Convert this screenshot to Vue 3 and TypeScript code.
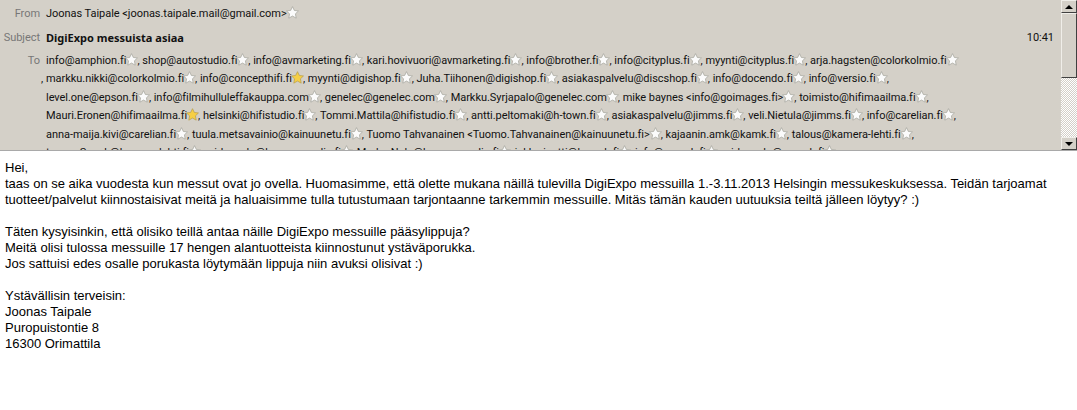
<script setup lang="ts">
interface Address {
  text: string
  gold?: boolean
}

const addr = (text: string, gold = false): Address => ({ text, gold })

const toRows: { lead: string; items: Address[]; trailing: boolean }[] = [
  {
    lead: 'To',
    trailing: false,
    items: [
      addr('info@amphion.fi'),
      addr('shop@autostudio.fi'),
      addr('info@avmarketing.fi'),
      addr('kari.hovivuori@avmarketing.fi'),
      addr('info@brother.fi'),
      addr('info@cityplus.fi'),
      addr('myynti@cityplus.fi'),
      addr('arja.hagsten@colorkolmio.fi')
    ]
  },
  {
    lead: ',',
    trailing: true,
    items: [
      addr('markku.nikki@colorkolmio.fi'),
      addr('info@concepthifi.fi', true),
      addr('myynti@digishop.fi'),
      addr('Juha.Tiihonen@digishop.fi'),
      addr('asiakaspalvelu@discshop.fi'),
      addr('info@docendo.fi'),
      addr('info@versio.fi')
    ]
  },
  {
    lead: '',
    trailing: true,
    items: [
      addr('level.one@epson.fi'),
      addr('info@filmihulluleffakauppa.com'),
      addr('genelec@genelec.com'),
      addr('Markku.Syrjapalo@genelec.com'),
      addr('mike baynes <info@goimages.fi>'),
      addr('toimisto@hifimaailma.fi')
    ]
  },
  {
    lead: '',
    trailing: true,
    items: [
      addr('Mauri.Eronen@hifimaailma.fi', true),
      addr('helsinki@hifistudio.fi'),
      addr('Tommi.Mattila@hifistudio.fi'),
      addr('antti.peltomaki@h-town.fi'),
      addr('asiakaspalvelu@jimms.fi'),
      addr('veli.Nietula@jimms.fi'),
      addr('info@carelian.fi')
    ]
  },
  {
    lead: '',
    trailing: true,
    items: [
      addr('anna-maija.kivi@carelian.fi'),
      addr('tuula.metsavainio@kainuunetu.fi'),
      addr('Tuomo Tahvanainen <Tuomo.Tahvanainen@kainuunetu.fi>'),
      addr('kajaanin.amk@kamk.fi'),
      addr('talous@kamera-lehti.fi')
    ]
  },
  {
    lead: '',
    trailing: false,
    items: [
      addr('teemu.Sopek@kamera-lehti.fi'),
      addr('mirka.salo@kameramedia.fi'),
      addr('Marko.Nalo@kameramedia.fi'),
      addr('jukka.juntti@kamek.fi'),
      addr('info@samok.fi'),
      addr('mirka.salo@samok.fi')
    ]
  }
]

const paragraphs: string[][] = [
  [
    'Hei,',
    'taas on se aika vuodesta kun messut ovat jo ovella. Huomasimme, että olette mukana näillä tulevilla DigiExpo messuilla 1.-3.11.2013 Helsingin messukeskuksessa. Teidän tarjoamat',
    'tuotteet/palvelut kiinnostaisivat meitä ja haluaisimme tulla tutustumaan tarjontaanne tarkemmin messuille. Mitäs tämän kauden uutuuksia teiltä jälleen löytyy? :)'
  ],
  [
    'Täten kysyisinkin, että olisiko teillä antaa näille DigiExpo messuille pääsylippuja?',
    'Meitä olisi tulossa messuille 17 hengen alantuotteista kiinnostunut ystäväporukka.',
    'Jos sattuisi edes osalle porukasta löytymään lippuja niin avuksi olisivat :)'
  ],
  [
    'Ystävällisin terveisin:',
    'Joonas Taipale',
    'Puropuistontie 8',
    '16300 Orimattila'
  ]
]
</script>

<template>
  <div class="mail">
    <div class="head">
      <div class="fields">
        <div class="field from">
          <span class="label">From</span>
          <span class="value">Joonas Taipale &lt;joonas.taipale.mail@gmail.com&gt;<svg class="star" viewBox="0 0 12 12"><path d="M6 .6 7.7 4.1 11.5 4.6 8.7 7.2 9.4 11.2 6 9.3 2.6 11.2 3.3 7.2.5 4.6 4.3 4.1Z" /></svg></span>
        </div>
        <div class="field subject">
          <span class="label">Subject</span>
          <strong class="value title">DigiExpo messuista asiaa</strong>
          <span class="time">10:41</span>
        </div>
        <div v-for="(row, i) in toRows" :key="i" class="field to">
          <span class="label" :class="{ comma: row.lead === ',' }">{{ row.lead }}</span>
          <span class="value">
            <span v-for="(item, j) in row.items" :key="item.text">{{ item.text }}<svg class="star" :class="{ gold: item.gold }" viewBox="0 0 12 12"><path d="M6 .6 7.7 4.1 11.5 4.6 8.7 7.2 9.4 11.2 6 9.3 2.6 11.2 3.3 7.2.5 4.6 4.3 4.1Z" /></svg><template v-if="j < row.items.length - 1 || row.trailing">, </template></span>
          </span>
        </div>
      </div>
      <div class="scrollbar">
        <div class="btn"><i class="arrow up"></i></div>
        <div class="thumb"></div>
        <div class="track"></div>
        <div class="btn"><i class="arrow down"></i></div>
      </div>
    </div>
    <div class="body">
      <p v-for="(lines, i) in paragraphs" :key="i">
        <template v-for="line in lines" :key="line">{{ line }}<br></template>
      </p>
    </div>
  </div>
</template>

<style scoped>
.mail {
  width: 1077px;
  height: 410px;
  overflow: hidden;
  background: #fff;
}

.head {
  display: flex;
  height: 151px;
  background: #d4d0c8;
  border-bottom: 1px solid #a9a9a9;
  box-sizing: border-box;
  overflow: hidden;
}

.fields {
  flex: 1;
  min-width: 0;
  padding-top: 5px;
  font-family: Roboto, "Noto Sans", sans-serif;
  font-size: 11px;
  letter-spacing: -0.04px;
  color: #111;
}

.field {
  display: flex;
  white-space: pre;
  height: 18.4px;
  line-height: 18px;
}

.from {
  height: 24px;
}

.subject {
  height: 23px;
}

.label {
  flex: none;
  width: 40px;
  margin-right: 6px;
  text-align: right;
  color: #777;
}

.label.comma {
  color: #111;
  margin-right: 0;
  width: 46px;
  padding-right: 3px;
  box-sizing: border-box;
}

.value {
  flex: 1;
}

.title {
  font-family: "Noto Sans", sans-serif;
  letter-spacing: 0;
}

.time {
  margin-right: 7px;
}

.star {
  width: 13px;
  height: 13px;
  margin: 0 -1px 0 -1px;
  vertical-align: -2px;
  fill: #fbfbfb;
  stroke: #a8a8a0;
  stroke-width: 0.7;
}

.star.gold {
  fill: #f6cf45;
  stroke: #b9a050;
}

.scrollbar {
  flex: none;
  width: 16px;
  display: flex;
  flex-direction: column;
}

.btn,
.thumb {
  background: #d4d0c8;
  border: 1px solid;
  border-color: #f0eee9 #404040 #404040 #f0eee9;
  box-sizing: border-box;
}

.btn {
  height: 13px;
  display: flex;
  align-items: center;
  justify-content: center;
}

.thumb {
  height: 65px;
}

.track {
  flex: 1;
  background: repeating-conic-gradient(#fff 0 25%, #d4d0c8 0 50%) 0 0 / 2px 2px;
}

.arrow {
  width: 0;
  height: 0;
  border-left: 4px solid transparent;
  border-right: 4px solid transparent;
}

.arrow.up {
  border-bottom: 4px solid #000;
}

.arrow.down {
  border-top: 4px solid #000;
}

.body {
  padding: 9px 0 0 5px;
  font-family: "Liberation Sans", Arial, sans-serif;
  font-size: 13px;
  line-height: 16px;
  color: #000;
  white-space: nowrap;
}

.body p {
  margin: 0 0 16px;
}
</style>

<style>
html,
body {
  margin: 0;
  background: #fff;
}
</style>
